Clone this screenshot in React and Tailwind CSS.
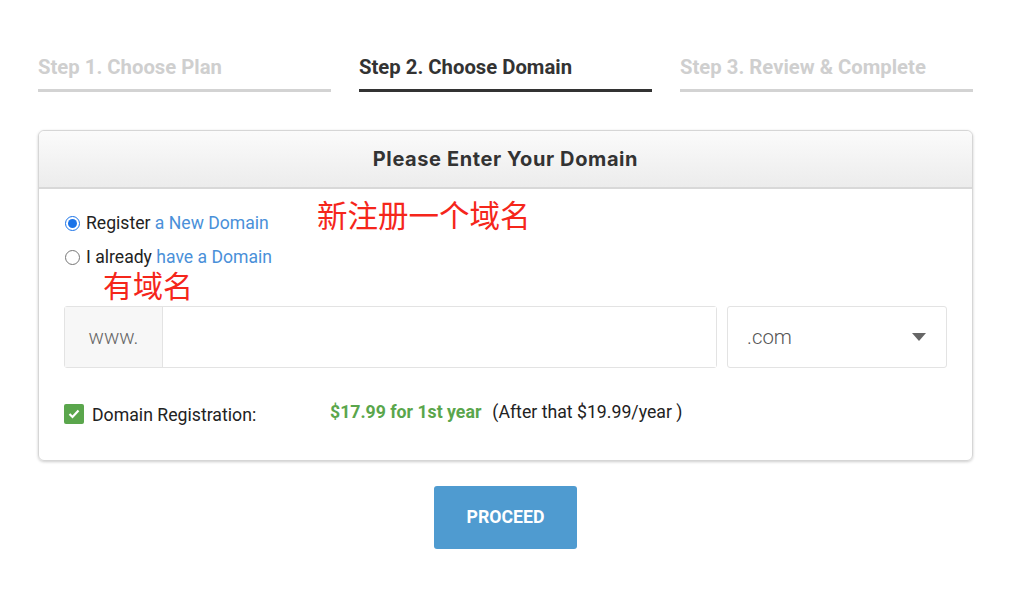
import React from 'react';

const steps = [
  { label: 'Step 1. Choose Plan', active: false },
  { label: 'Step 2. Choose Domain', active: true },
  { label: 'Step 3. Review & Complete', active: false },
];

export default function App() {
  return (
    <div className="w-[1024px] h-[601px] bg-white font-['Roboto','Noto_Sans_CJK_SC',sans-serif] overflow-hidden">
      <div className="pl-[38px] pr-[51px] pt-[55px]">
        {/* steps */}
        <div className="grid grid-cols-3 gap-[28px]">
          {steps.map((s) => (
            <div key={s.label} className={`border-b-[3px] pb-[10px] ${s.active ? 'border-[#333]' : 'border-[#d3d3d3]'}`}>
              <div className={`text-[20.3px] font-bold leading-[24px] ${s.active ? 'text-[#333]' : 'text-[#cfcfcf]'}`}>{s.label}</div>
            </div>
          ))}
        </div>

        {/* card */}
        <div className="mt-[38px] border border-[#d6d6d6] rounded-[6px] shadow-[0_1px_3px_rgba(0,0,0,0.2)]">
          <div className="h-[58px] flex items-center justify-center rounded-t-[6px] bg-gradient-to-b from-[#fbfbfb] to-[#ececec] border-b-2 border-[#d8d8d8]">
            <h2 className="text-[20px] font-bold text-[#333] font-['Inter',sans-serif] tracking-[0.6px]">Please Enter Your Domain</h2>
          </div>

          <div className="px-[25px] pt-[17px] pb-[31px]">
            <div className="flex items-start">
              <div className="flex flex-col">
                <label className="flex items-center h-[34px] text-[17.6px] text-[#222]">
                  <input type="radio" name="d" defaultChecked className="w-[15px] h-[15px] mr-[6px] ml-[1px] accent-[#1a73e8]" />
                  Register&nbsp;<span className="text-[#4a90d9]">a New Domain</span>
                </label>
                <label className="flex items-center h-[34px] text-[17.6px] text-[#222]">
                  <input type="radio" name="d" className="w-[15px] h-[15px] mr-[6px] ml-[1px]" />
                  I already&nbsp;<span className="text-[#4a90d9]">have a Domain</span>
                </label>
              </div>
              <div className="ml-[45px] mt-[-9px] text-[30.5px] leading-[40px] text-[#f5261b]">新注册一个域名</div>
            </div>
            <div className="ml-[39px] mt-[-4px] text-[30px] leading-[34px] text-[#f5261b]">有域名</div>

            <div className="flex gap-[10px] mt-[2px]">
              <div className="flex-1 flex h-[62px] border border-[#e3e3e3] rounded-[3px]">
                <div className="w-[98px] bg-[#f7f7f7] border-r border-[#e3e3e3] flex items-center justify-center text-[20.4px] text-[#666] font-light">www.</div>
                <div className="flex-1 bg-white" />
              </div>
              <div className="w-[220px] h-[62px] border border-[#e3e3e3] rounded-[3px] flex items-center justify-between pl-[19px] pr-[20px]">
                <span className="text-[20.4px] text-[#555] font-light">.com</span>
                <svg width="14" height="8" viewBox="0 0 14 8"><path d="M0 0h14L7 8z" fill="#666" /></svg>
              </div>
            </div>

            <div className="flex items-center mt-[32px] text-[17.7px] text-[#222]">
              <span className="w-[20px] h-[20px] rounded-[2px] bg-[#5aa64c] flex items-center justify-center">
                <svg width="12" height="10" viewBox="0 0 12 10"><path d="M1.5 5l3 3 6-6.5" stroke="#fff" strokeWidth="2.2" fill="none" /></svg>
              </span>
              <span className="ml-[8px] w-[238px] mt-[2px]">Domain Registration:</span>
              <span className="text-[#5aa64c] font-bold mt-[-4px]">$17.99 for 1st year</span>
              <span className="ml-[11px] mt-[-4px]">(After that $19.99/year )</span>
            </div>
          </div>
        </div>

        <div className="flex justify-center mt-[25px]">
          <button className="w-[143px] h-[63px] rounded-[3px] bg-[#4f9bd0] text-white font-bold text-[17.7px]">PROCEED</button>
        </div>
      </div>
    </div>
  );
}
